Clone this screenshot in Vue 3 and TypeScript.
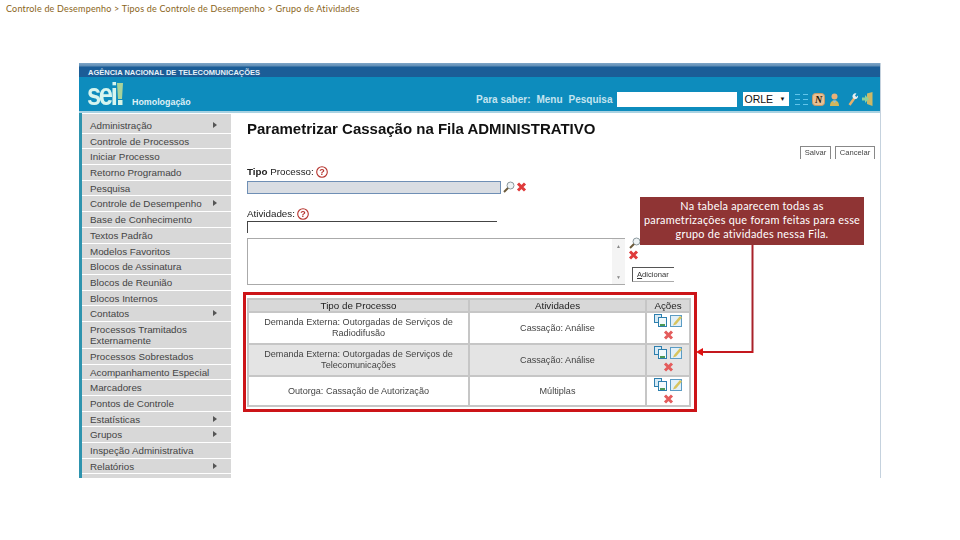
<script setup lang="ts">
interface MenuItem { label: string; arrow?: boolean; tall?: boolean }
const menu: MenuItem[] = [
  { label: 'Administração', arrow: true },
  { label: 'Controle de Processos' },
  { label: 'Iniciar Processo' },
  { label: 'Retorno Programado' },
  { label: 'Pesquisa' },
  { label: 'Controle de Desempenho', arrow: true },
  { label: 'Base de Conhecimento' },
  { label: 'Textos Padrão' },
  { label: 'Modelos Favoritos' },
  { label: 'Blocos de Assinatura' },
  { label: 'Blocos de Reunião' },
  { label: 'Blocos Internos' },
  { label: 'Contatos', arrow: true },
  { label: 'Processos Tramitados Externamente', tall: true },
  { label: 'Processos Sobrestados' },
  { label: 'Acompanhamento Especial' },
  { label: 'Marcadores' },
  { label: 'Pontos de Controle' },
  { label: 'Estatísticas', arrow: true },
  { label: 'Grupos', arrow: true },
  { label: 'Inspeção Administrativa' },
  { label: 'Relatórios', arrow: true },
]
const rows = [
  { tipo: 'Demanda Externa: Outorgadas de Serviços de Radiodifusão', ativ: 'Cassação: Análise' },
  { tipo: 'Demanda Externa: Outorgadas de Serviços de Telecomunicações', ativ: 'Cassação: Análise' },
  { tipo: 'Outorga: Cassação de Autorização', ativ: 'Múltiplas' },
]
</script>

<template>
  <div class="page">
    <div class="crumb">Controle de Desempenho &gt; Tipos de Controle de Desempenho &gt; Grupo de Atividades</div>
    <div class="shot">
      <div class="agency">AGÊNCIA NACIONAL DE TELECOMUNICAÇÕES</div>
      <header class="head">
        <div class="logo">
          <span class="sei">sei</span>
          <svg class="bang" width="6" height="22" viewBox="0 0 6 22"><path d="M0 0h6l-1 16H1z" fill="#a9d39a"/><rect x="1" y="17" width="4.500" height="5" fill="#d9f3e4"/></svg>
          <span class="org">Homologação</span>
        </div>
        <nav class="tools">
          <span>Para saber:</span><span>Menu</span><span>Pesquisa</span>
          <span class="search"></span>
          <span class="select">ORLE<i>▼</i></span>
          <div class="icons">
            <svg width="13" height="13" viewBox="0 0 13 13"><path d="M0 1.500h5M0 6.500h5M0 11.500h5M8 1.500h5M8 6.500h5M8 11.500h5" stroke="#62c4ea"/></svg>
            <svg width="13" height="13" viewBox="0 0 13 13"><rect x=".5" y=".5" width="12" height="12" rx="3" fill="#e8c094" stroke="#c99a66"/><text x="6.500" y="10" font-size="10" text-anchor="middle" fill="#1c1408" font-family="Liberation Serif" font-weight="700" font-style="italic">N</text></svg>
            <svg width="11" height="13" viewBox="0 0 11 13"><circle cx="5.500" cy="3.500" r="3" fill="#eab179"/><path d="M1 13c0-4 2-5.500 4.500-5.500S10 9 10 13z" fill="#d2b65c"/><path d="M3.500 7.500h4L5.500 10z" fill="#8fc0dc"/></svg>
            <svg class="wrench" width="10" height="13" viewBox="0 0 10 13"><path d="M1.500 12l5-7" stroke="#e6b06c" stroke-width="2.500"/><path d="M5 5a3 3 0 0 1 3.500-4.500L7 2.500 8.300 4 10 2.500A3 3 0 0 1 6.500 6z" fill="#e8edf0"/></svg>
            <svg class="exit" width="11" height="14" viewBox="0 0 11 14"><path d="M5 1.500l5.500-1.500v14l-5.500-2z" fill="#cdb865"/><path d="M0 5.500h3V3l4 4-4 4V8.500H0z" fill="#8ccf9c"/></svg>
          </div>
        </nav>
      </header>
      <div class="body">
        <aside class="side">
          <ul class="menu">
            <li v-for="m in menu" :key="m.label" :class="{ tall: m.tall }">
              <span class="lbl">{{ m.label }}</span>
              <i v-if="m.arrow" class="tri"></i>
            </li>
          </ul>
        </aside>
        <main class="main">
          <h1>Parametrizar Cassação na Fila ADMINISTRATIVO</h1>
          <div class="btns"><span class="btn">Salvar</span><span class="btn">Cancelar</span></div>
          <div class="label lab1"><span><b>Tipo</b> Processo:</span><svg class="help" width="12" height="12" viewBox="0 0 12 12"><circle cx="6" cy="6" r="5.300" fill="#fff" stroke="#b5322c" stroke-width="1.100"/><text x="6" y="9.200" font-size="9" text-anchor="middle" fill="#b5322c" font-family="Liberation Sans" font-weight="700">?</text></svg></div>
          <div class="line">
            <div class="tipo"></div>
            <svg class="lens" width="12" height="12" viewBox="0 0 12 12"><circle cx="7.500" cy="4.500" r="3.500" fill="#eef3f5" stroke="#8a979c"/><path d="M5 7l-4 4" stroke="#6b5a3a" stroke-width="2"/></svg>
            <svg class="x" width="11" height="10" viewBox="0 0 11 10"><path d="M2 1.500L9 8.500M9 1.500L2 8.500" stroke="#df3b3b" stroke-width="3"/></svg>
          </div>
          <div class="label lab2"><span>Atividades:</span><svg class="help" width="12" height="12" viewBox="0 0 12 12"><circle cx="6" cy="6" r="5.300" fill="#fff" stroke="#b5322c" stroke-width="1.100"/><text x="6" y="9.200" font-size="9" text-anchor="middle" fill="#b5322c" font-family="Liberation Sans" font-weight="700">?</text></svg></div>
          <div class="ativ"></div>
          <div class="picker">
            <div class="area">
              <div class="scroll"><span>▲</span><span>▼</span></div>
            </div>
            <div class="pick-tools">
              <svg class="lens2" width="12" height="12" viewBox="0 0 12 12"><circle cx="7.500" cy="4.500" r="3.500" fill="#eef3f5" stroke="#8a979c"/><path d="M5 7l-4 4" stroke="#6b5a3a" stroke-width="2"/></svg>
              <svg class="x2" width="11" height="10" viewBox="0 0 11 10"><path d="M2 1.500L9 8.500M9 1.500L2 8.500" stroke="#df3b3b" stroke-width="3"/></svg>
              <span class="add"><u>A</u>dicionar</span>
            </div>
          </div>
          <div class="tablewrap">
            <table>
              <thead><tr><th class="c1">Tipo de Processo</th><th class="c2">Atividades</th><th class="c3">Ações</th></tr></thead>
              <tbody>
                <tr v-for="(r, i) in rows" :key="i" :class="{ odd: i === 1, last: i === 2 }">
                  <td>{{ r.tipo }}</td>
                  <td>{{ r.ativ }}</td>
                  <td class="acts">
                    <svg width="13" height="13" viewBox="0 0 13 13"><rect x=".5" y=".5" width="7" height="8" fill="#d8eaf5" stroke="#2d7fae"/><rect x="4.500" y="3.500" width="8" height="9" fill="#f3fafc" stroke="#2d7fae"/><rect x="6" y="10" width="5" height="2" fill="#4d9a55"/></svg>
                    <svg width="13" height="13" viewBox="0 0 13 13"><rect x=".5" y="1.500" width="11" height="11" fill="#e2f0f8" stroke="#5b9cc4"/><path d="M4 9l6-7 2 1.500-6 7-3 1z" fill="#d8c45e"/></svg>
                    <svg class="del" width="11" height="10" viewBox="0 0 11 10"><path d="M2 1.500L9 8.500M9 1.500L2 8.500" stroke="#e45c5c" stroke-width="3"/></svg>
                  </td>
                </tr>
              </tbody>
            </table>
          </div>
        </main>
      </div>
    </div>
    <div class="redbox"></div>
    <svg class="arrow" width="62" height="112" viewBox="0 0 62 112">
      <path d="M56.500 0V106" fill="none" stroke="#a8222a" stroke-width="2"/>
      <path d="M57.500 107H6" fill="none" stroke="#c4181e" stroke-width="2"/>
      <path d="M0 107l7-4v8z" fill="#e01010"/>
    </svg>
    <div class="note">Na tabela aparecem todas as parametrizações que foram feitas para esse grupo de atividades nessa Fila.</div>
  </div>
</template>

<style>
html, body { margin: 0; background: #fff; }
</style>

<style scoped>
.page { position: relative; width: 960px; height: 540px; overflow: hidden; background: #fff; font-family: "Liberation Sans", Arial, sans-serif; }
.crumb { height: 63px; box-sizing: border-box; padding: 3px 0 0 6px; font: 9px/12px Lato, "Open Sans", sans-serif; color: #8a6420; letter-spacing: .2px; white-space: nowrap; }
.shot { width: 802px; height: 415px; margin-left: 79px; overflow: hidden; box-sizing: border-box; border-right: 1.500px solid #c5d2de; filter: blur(.35px); display: flex; flex-direction: column; }
.agency { height: 14px; flex: none; box-sizing: border-box; padding: 5px 0 0 9px; background: linear-gradient(#7fa6c8 0, #5f8db5 3px, #1b5d97 4px); color: #e8f2f8; font-size: 7.500px; font-weight: 700; line-height: 9px; white-space: nowrap; }
.head { height: 34px; flex: none; display: flex; justify-content: space-between; background: #0d8cbd; border-bottom: 2px solid #a9d2e2; }
.logo { display: flex; align-items: flex-end; padding-left: 8px; }
.sei { width: 30px; height: 28px; color: #d6f5ef; font-size: 32px; font-weight: 700; letter-spacing: -3px; line-height: 28px; transform: scaleX(.8); transform-origin: left bottom; margin-bottom: 3px; white-space: nowrap; }
.bang { margin: 0 0 6px 0; }
.org { color: #dff0f6; font-size: 8.900px; font-weight: 700; margin: 0 0 3px 9px; line-height: 12px; }
.tools { display: flex; align-items: center; gap: 6px; padding: 10px 7.500px 0 0; color: #c4e4f0; font-size: 10px; font-weight: 700; height: 24px; }
.search { width: 120px; height: 15px; background: #fff; margin-left: -2px; }
.select { width: 46px; height: 14px; box-sizing: border-box; background: #fff; color: #111; font-size: 10.500px; font-weight: 400; line-height: 14px; padding-left: 2px; display: flex; justify-content: space-between; }
.select i { font-style: normal; font-size: 6px; padding-right: 3px; }
.icons { display: flex; align-items: center; gap: 4px; }
.wrench { margin-left: 4px; }
.body { flex: 1; display: flex; min-height: 0; }
.side { width: 152px; flex: none; box-sizing: border-box; border-left: 3px solid #2d93ae; padding-top: 1px; }
.menu { list-style: none; margin: 0; padding: 4px 0 0; width: 149px; box-sizing: border-box; background: #d8d8d8; height: 400px; }
.menu li { height: 15.700px; box-sizing: border-box; border-bottom: 1px solid #fff; padding: 2px 0 0 8px; display: flex; align-items: flex-start; justify-content: space-between; color: #444; font-size: 9.800px; line-height: 12px; }
.menu li.tall { height: 27px; }
.menu li.tall .lbl { width: 120px; line-height: 11px; }
.tri { width: 0; height: 0; margin: 2px 14px 0 0; border-left: 4px solid #555; border-top: 3.500px solid transparent; border-bottom: 3.500px solid transparent; }
.main { flex: 1; position: relative; padding: 0 0 0 16px; color: #222; min-width: 0; }
h1 { margin: 0; padding-top: 7px; font-size: 15px; line-height: 17px; color: #111; white-space: nowrap; }
.btns { display: flex; justify-content: flex-end; gap: 4px; padding: 9px 5px 0 0; height: 13px; }
.btn { box-sizing: border-box; height: 13px; border: 1px solid #888; border-bottom: 0; font-size: 7.600px; line-height: 12px; color: #444; text-align: center; }
.btn:first-child { width: 31px; }
.btn:last-child { width: 40px; }
.label { font-size: 9.800px; line-height: 13px; display: flex; align-items: center; gap: 2px; height: 13px; white-space: pre; }
.help { flex: none; }
.lab1 { margin-top: 6px; }
.line { display: flex; align-items: center; margin-top: 2px; height: 14px; }
.tipo { width: 254px; height: 13px; box-sizing: border-box; background: #d9dde3; border: 1px solid #6f8fb5; }
.lens { margin-left: 2px; }
.x { margin-left: 1px; }
.lab2 { margin-top: 13px; }
.ativ { width: 250px; height: 12px; margin-top: 1px; box-sizing: border-box; border-top: 1px solid #444; border-left: 1px solid #444; }
.picker { display: flex; margin-top: 5px; height: 47px; }
.area { width: 378px; box-sizing: border-box; border: 1px solid #aaa; border-right: 0; display: flex; justify-content: flex-end; }
.scroll { width: 13px; background: #f4f4f4; display: flex; flex-direction: column; justify-content: space-between; align-items: center; font-size: 5px; color: #888; padding: 4px 0; }
.pick-tools { position: relative; flex: 1; }
.lens2 { position: absolute; left: 4px; top: -1px; }
.x2 { position: absolute; left: 3px; top: 12px; }
.add { position: absolute; left: 7px; top: 29px; width: 42px; height: 15px; box-sizing: border-box; border: 1px solid #555; border-right: 0; border-bottom: 1px solid #aaa; padding-left: 4px; font-size: 7.600px; line-height: 13px; color: #333; }
.tablewrap { margin-top: 13px; }
table { width: 444px; border-collapse: collapse; table-layout: fixed; font-size: 9.100px; color: #444; }
th { background: #d8d8d8; height: 11px; padding: 0; font-weight: 400; font-size: 9.800px; border: 2px solid #c6c6c6; color: #222; line-height: 11px; }
.c1 { width: 219px; }
.c2 { width: 175px; }
td { height: 29px; padding: 0 10px; text-align: center; border: 2px solid #c6c6c6; line-height: 11px; background: #fff; }
tr.last td { height: 27px; }
tr.odd td { background: #e4e4e4; }
td.acts { padding: 1px 0 0; line-height: 0; vertical-align: top; }
.acts svg { margin: 0 1.500px; vertical-align: top; }
.acts .del { display: block; margin: 3px auto 0; }
.redbox { position: absolute; left: 243px; top: 292px; width: 454px; height: 120px; box-sizing: border-box; border: 3px solid #cc1418; pointer-events: none; }
.arrow { position: absolute; left: 696px; top: 245px; }
.note { position: absolute; left: 640px; top: 197px; width: 224px; height: 48px; box-sizing: border-box; padding: 2px 2px 0; background: #8f3434; color: #fff; text-align: center; font: 10.900px/14px Lato, "Open Sans", sans-serif; letter-spacing: .25px; }
</style>
